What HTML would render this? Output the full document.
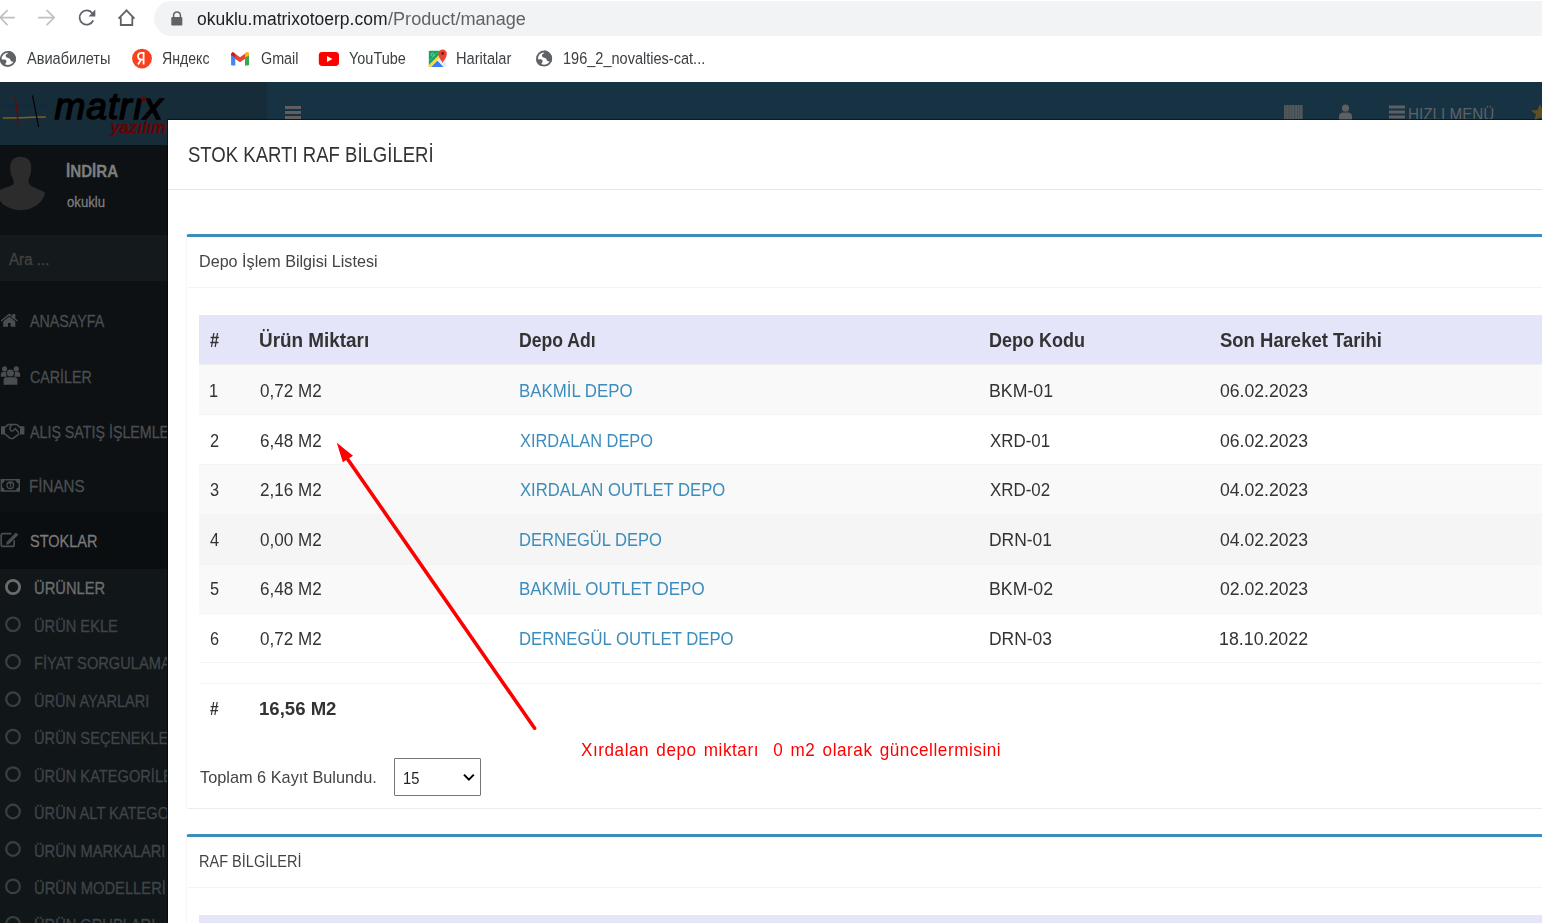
<!DOCTYPE html>
<html><head><meta charset="utf-8"><title>Stok</title><style>
*{box-sizing:border-box;margin:0;padding:0}
html,body{width:1542px;height:923px;overflow:hidden;background:#fff;font-family:"Liberation Sans",sans-serif;position:relative}
.t{position:absolute;white-space:nowrap;transform-origin:0 0;display:block}
.abs{position:absolute}
.side .t{-webkit-text-stroke:0.3px currentColor}
</style></head>
<body>
<!-- browser chrome -->
<div class="abs" style="left:0;top:0;width:1542px;height:82px;background:#fff"></div>
<svg class="abs" style="left:0;top:0" width="150" height="40" viewBox="0 0 150 40">
  <g fill="none" stroke="#bdc1c6" stroke-width="1.7" stroke-linecap="square">
    <path d="M14 17.6 H1.2 M7 10.6 L0.2 17.6 L7 24.6"/>
    <path d="M38.8 17.6 H53.4 M47.2 10.6 L54.2 17.6 L47.2 24.6"/>
  </g>
  <g fill="none" stroke="#5f6368" stroke-width="1.8">
    <path d="M93.2 20.4 A7.1 7.1 0 1 1 92.3 13.2"/>
    <path d="M120.8 17.2 V25 H132.3 V17.2" stroke-linejoin="miter"/>
    <path d="M118.6 18.6 L126.5 10.4 L134.4 18.6"/>
  </g>
  <path d="M95.3 9.6 V16.6 H88.6 Z" fill="#5f6368"/>
</svg>
<div class="abs" style="left:154px;top:1px;width:1420px;height:35px;border-radius:17.5px;background:#f1f3f4"></div>
<svg class="abs" style="left:168px;top:9px" width="18" height="20" viewBox="0 0 18 20">
  <path d="M5.6 8.5 V6.3 A3.4 3.4 0 0 1 12.4 6.3 V8.5" fill="none" stroke="#5f6368" stroke-width="1.5"/>
  <rect x="3.3" y="8" width="11" height="8.6" rx="1.2" fill="#5f6368"/>
</svg>

<!-- bookmark icons -->
<svg class="abs" style="left:0;top:44px" width="720" height="32" viewBox="0 44 720 32">
  <!-- globe 1 -->
  <g>
  <circle cx="7.9" cy="58.9" r="7.1" fill="none" stroke="#5f6368" stroke-width="1.8"/>
  <path d="M7.9 50.9 L7.9 53.6 C6.2 54 5.4 55.2 5.8 56.6 C6.2 58 8.6 57.8 9.8 58.8 C10.6 59.6 10.4 60.8 11.6 61.6 L15.3 62 A8 8 0 0 0 7.9 50.9 Z" fill="#5f6368"/>
  <path d="M-0.1 59.5 L4.5 59.5 C5.8 59.5 6.6 60.5 6.4 61.8 C6.2 63 5 63.6 5.1 65 L5.3 66.5 A8 8 0 0 1 -0.1 59.5 Z" fill="#5f6368"/>
  </g>
  <!-- yandex -->
  <circle cx="142" cy="58.6" r="9.9" fill="#fc3f1d"/>
  <path d="M143.6 64.4 V52.9 H141.8 C139 52.9 138 54.6 138 56.4 C138 58.2 139.1 59.4 141.1 59.6 L138 64.4 M143.6 59.6 H141.2" fill="none" stroke="#fff" stroke-width="1.8"/>
  <!-- gmail -->
  <path d="M231.1 53.8 L232.8 52.1 L240 57.2 L247.2 52.1 L249 53.8 V56 L240 62.2 L231.1 56 Z" fill="#ea4335"/>
  <path d="M231.1 53.8 L232.8 52.1 L235.3 53.9 V57.5 L231.1 56 Z" fill="#c5221f"/>
  <path d="M231.1 55 V64.2 Q231.1 65.4 232.3 65.4 H235.3 V57.5 Z" fill="#4285f4"/>
  <path d="M245 57.5 V65.4 H247.8 Q249 65.4 249 64.2 V55 Z" fill="#34a853"/>
  <path d="M245 53.9 L247.2 52.1 Q249 51.6 249 53.8 V55.6 L245 57.5 Z" fill="#fbbc04"/>
  <!-- youtube -->
  <rect x="318.8" y="52" width="20.2" height="13.9" rx="3.4" fill="#ff0000"/>
  <path d="M327 55.9 V62.1 L332.4 59 Z" fill="#fff"/>
  <!-- maps -->
  <path d="M429.8 50.7 H439.5 L428.8 61.4 V51.7 Q428.8 50.7 429.8 50.7 Z" fill="#1aa260"/>
  <path d="M428.8 61.4 L439.5 50.7 L441 52.5 L438.6 57.2 L428.8 67 Z" fill="#1aa260"/>
  <path d="M428.8 65 L439.2 54.6 L440.4 56.4 L430.6 67 H428.8 Z" fill="#fbd830"/>
  <path d="M431 67 L437.4 60.6 L443.8 67 Z" fill="#3b7ff0"/>
  <path d="M437.4 60.6 L440.2 57.6 L446 63.2 V66 Q446 67 445 67 H443.8 Z" fill="#e8eaed"/>
  <path d="M442.6 62.8 C441.4 60.4 438.4 58 438.4 53.6 A4.2 4.2 0 0 1 446.8 53.6 C446.8 58 443.8 60.4 442.6 62.8 Z" fill="#e94235"/>
  <circle cx="442.6" cy="53.5" r="1.4" fill="#7a1a12"/>
  <circle cx="432.6" cy="54.6" r="1.5" fill="none" stroke="#8fd3b0" stroke-width="0.8"/>
  <!-- globe 2 -->
  <g transform="translate(536.2,-0.3)">
  <circle cx="7.9" cy="58.9" r="7.1" fill="none" stroke="#5f6368" stroke-width="1.8"/>
  <path d="M7.9 50.9 L7.9 53.6 C6.2 54 5.4 55.2 5.8 56.6 C6.2 58 8.6 57.8 9.8 58.8 C10.6 59.6 10.4 60.8 11.6 61.6 L15.3 62 A8 8 0 0 0 7.9 50.9 Z" fill="#5f6368"/>
  <path d="M-0.1 59.5 L4.5 59.5 C5.8 59.5 6.6 60.5 6.4 61.8 C6.2 63 5 63.6 5.1 65 L5.3 66.5 A8 8 0 0 1 -0.1 59.5 Z" fill="#5f6368"/>
  </g>
</svg>

<!-- app header -->
<div class="abs" style="left:0;top:82px;width:267px;height:63px;background:#172c39"></div>
<div class="abs" style="left:267px;top:82px;width:1275px;height:40px;background:#163243"></div>
<!-- logo -->
<svg class="abs" style="left:0;top:82px" width="170" height="63" viewBox="0 82 170 63">
  <path d="M2.8 105.2 C18 105.4 32 105.8 47.4 106" fill="none" stroke="#0a2a50" stroke-width="1.4"/>
  <path d="M2.8 118 C18 117.8 32 117.4 45.8 117" fill="none" stroke="#806018" stroke-width="1.5"/>
  <path d="M14.9 95.8 C16.4 105 17.4 115 18.2 125.5" fill="none" stroke="#5e0c0c" stroke-width="1.3"/>
  <path d="M32.5 95.5 L38.6 127" fill="none" stroke="#000" stroke-width="1.2"/>
  
</svg>
<div class="abs" style="left:54.5px;top:88px;font:italic 37px/37px 'Liberation Sans',sans-serif;-webkit-text-stroke:1.5px #000;color:#000;transform:scaleX(1.0);transform-origin:0 0;letter-spacing:1px">matrıx</div>
<div class="abs" style="left:110.5px;top:120px;font:italic 16px/16px 'Liberation Sans',sans-serif;-webkit-text-stroke:0.7px #6b0000;color:#6b0000;transform:scaleX(1.04);letter-spacing:0.3px;transform-origin:0 0">yazılım</div>

<svg class="abs" style="left:130px;top:92px;z-index:5" width="20" height="14" viewBox="130 92 20 14"><path d="M139.6 97.4 L147 97.4 L143.2 102.2 Z" fill="#6b0000"/></svg>
<!-- navbar icons -->
<div class="abs" style="left:285px;top:105.5px;width:16px;height:3px;background:#5f5f5f"></div>
<div class="abs" style="left:285px;top:110.5px;width:16px;height:3px;background:#5f5f5f"></div>
<div class="abs" style="left:285px;top:115.5px;width:16px;height:3px;background:#5f5f5f"></div>
<svg class="abs" style="left:1280px;top:100px" width="262" height="20" viewBox="1280 100 262 20">
  <g fill="#5d5f60">
    <rect x="1284" y="105" width="18.6" height="14.2" fill="#525a5e"/>
    <g fill="#3a464d"><rect x="1285.6" y="105" width="0.7" height="14.2"/><rect x="1288.6" y="105" width="0.8" height="14.2"/><rect x="1291.4" y="105" width="0.6" height="14.2"/><rect x="1294.2" y="105" width="0.9" height="14.2"/><rect x="1297" y="105" width="0.6" height="14.2"/><rect x="1299.4" y="105" width="0.7" height="14.2"/></g>
    <circle cx="1345.5" cy="108.2" r="3.6"/>
    <path d="M1339 120 V116.5 C1339 113.5 1341 112.5 1343 112.5 H1348 C1350 112.5 1352 113.5 1352 116.5 V120 Z"/>
    <rect x="1389" y="105.5" width="16" height="3"/><rect x="1389" y="110.5" width="16" height="3"/><rect x="1389" y="115.5" width="16" height="3"/>
  </g>
  <path d="M1540 104 L1542.5 110 L1549 110.5 L1544 114.5 L1546 121 L1540 117.5 L1534 121 L1536 114.5 L1531 110.5 L1537.5 110 Z" fill="#5e4f25"/>
</svg>

<!-- sidebar -->
<div class="abs" style="left:0;top:145px;width:168px;height:778px;background:#0d1113"></div>
<div class="abs" style="left:0;top:235px;width:168px;height:46px;background:#14191c"></div>
<div class="abs" style="left:0;top:512px;width:168px;height:57px;background:#0b0e10"></div>
<div class="abs" style="left:0;top:569px;width:168px;height:354px;background:#111619"></div>
<!-- avatar -->
<svg class="abs" style="left:0;top:150px" width="50" height="65" viewBox="0 150 50 65">
  <path d="M20.5 156.8 C27 156.8 31.2 160.4 31.2 166.6 C31.4 171 31 174.6 29 178 C28 180.6 28.4 183.6 30.6 185.4 C35 188.6 43 190 45 193 C44 201 34 210.2 21 210.2 C11 210.2 2 205 0 200.5 V190 C4 188 10 186.6 13 184.6 C14.4 183 13.8 180.6 12.6 178 C10.6 174.6 10 171 10.2 166.6 C10.4 160.4 14 156.8 20.5 156.8 Z" fill="#2c2c2c"/>
</svg>
<!-- sidebar icons -->
<svg class="abs" style="left:0;top:300px" width="30" height="260" viewBox="0 300 30 260">
  <g fill="#4a4d50">
    <!-- home -->
    <path d="M1.2 321 L9.3 314.4 L17.4 321" fill="none" stroke="#4a4d50" stroke-width="1.5"/>
    <rect x="12.4" y="314" width="2.9" height="4.6"/>
    <path d="M3.2 321.6 L9.3 316.5 L15.3 321.6 V326.8 H10.7 V323 H8 V326.8 H3.2 Z"/>
    <!-- users -->
    <circle cx="4.6" cy="368.9" r="2.6"/><circle cx="16.3" cy="368.9" r="2.6"/><circle cx="10.4" cy="373" r="3.5"/>
    <path d="M0.8 376.8 V374.4 Q0.8 372 3.2 372 H6.4 Q5.6 374.4 6.8 376.8 Z"/>
    <path d="M20.2 376.8 V374.4 Q20.2 372 17.8 372 H14.6 Q15.4 374.4 14.2 376.8 Z"/>
    <path d="M3.6 384.8 V380 Q3.6 377.2 6.4 377.2 H14.6 Q17.4 377.2 17.4 380 V384.8 Z"/>
    <!-- money -->
    <path d="M0.6 479 H20 V491.7 H0.6 Z M2.1 483.2 Q4.4 483.2 4.4 480.6 H16.2 Q16.2 483.2 18.5 483.2 V487.6 Q16.2 487.6 16.2 490.2 H4.4 Q4.4 487.6 2.1 487.6 Z" fill-rule="evenodd"/>
    <circle cx="10.3" cy="485.3" r="3.3" fill="none" stroke="#4a4d50" stroke-width="1.3"/>
    <path d="M9.3 483.8 L10.7 483.2 V487.4" fill="none" stroke="#4a4d50" stroke-width="1.1"/>
    <!-- edit -->
    <path d="M11.4 533.6 H3.2 Q1.2 533.6 1.2 535.6 V544.4 Q1.2 546.4 3.2 546.4 H12.2 Q14.2 546.4 14.2 544.4 V540.2" fill="none" stroke="#4a4d50" stroke-width="1.7"/>
    <path d="M8.2 542.6 L17.2 533.6" fill="none" stroke="#4a4d50" stroke-width="3.4"/>
    <path d="M6 544.8 L6.8 541.2 L9.6 544 Z"/>
  </g>
  <g fill="#4a4d50"><rect x="1" y="426.2" width="4" height="8.3"/><rect x="20" y="426.2" width="4.4" height="8.3"/></g>
  <path d="M4.8 427.4 C6 426.8 7 425 8.6 424.6 H16.6 C17.6 424.8 18.6 426.4 20 427.4 M12.6 424.6 C10.6 425.6 9.6 427.8 10.2 429.6 C10.8 431.4 13 431.4 14.4 429.6 L15.2 428.6 L18.8 432.8 M4.8 433.8 L9.2 437.6 C10.4 438.8 12.6 438.8 13.8 437.8 L19.4 433.6" fill="none" stroke="#4a4d50" stroke-width="1.5"/>
</svg>
<svg class="abs" style="left:0;top:570px" width="30" height="353" viewBox="0 570 30 353">
  <circle cx="13" cy="587" r="6.6" fill="none" stroke="#6b6b6b" stroke-width="2.8"/>
  <g fill="none" stroke="#394043" stroke-width="2.2">
    <circle cx="13" cy="624.3" r="6.8"/>
    <circle cx="13" cy="661.7" r="6.8"/>
    <circle cx="13" cy="699.2" r="6.8"/>
    <circle cx="13" cy="736.6" r="6.8"/>
    <circle cx="13" cy="774.1" r="6.8"/>
    <circle cx="13" cy="811.5" r="6.8"/>
    <circle cx="13" cy="849" r="6.8"/>
    <circle cx="13" cy="886.4" r="6.8"/>
    <circle cx="13" cy="923.8" r="6.8"/>
  </g>
</svg>

<!-- modal -->
<div class="abs" style="left:167px;top:119px;width:1400px;height:830px;background:#fff;background-clip:padding-box;border:1px solid rgba(0,0,0,0.5)"></div>
<div class="abs" style="left:168px;top:189px;width:1374px;height:1px;background:#e5e5e5"></div>
<!-- box 1 -->
<div class="abs" style="left:186px;top:234px;width:1400px;height:575px;border:1px solid #f6f6f6;border-bottom-color:#ececec;border-top:3px solid #3c8dbc;border-radius:3px;background:#fff"></div>
<div class="abs" style="left:188px;top:287px;width:1354px;height:1px;background:#f4f4f4"></div>
<!-- table -->
<div class="abs" style="left:199px;top:315px;width:1343px;height:49px;background:#e4e5f9"></div>
<div class="abs" style="left:199px;top:364px;width:1343px;height:1px;background:#f0f0f0"></div>
<div class="abs" style="left:199px;top:365px;width:1343px;height:49px;background:#f9f9f9"></div>
<div class="abs" style="left:199px;top:414px;width:1343px;height:1px;background:#f4f4f4"></div>
<div class="abs" style="left:199px;top:464px;width:1343px;height:1px;background:#f4f4f4"></div>
<div class="abs" style="left:199px;top:465px;width:1343px;height:49px;background:#f9f9f9"></div>
<div class="abs" style="left:199px;top:514px;width:1343px;height:49.5px;background:#f5f5f5"></div>
<div class="abs" style="left:199px;top:514px;width:1343px;height:1px;background:#f4f4f4"></div>
<div class="abs" style="left:199px;top:563.5px;width:1343px;height:50px;background:#f9f9f9"></div>
<div class="abs" style="left:199px;top:563.5px;width:1343px;height:1px;background:#f4f4f4"></div>
<div class="abs" style="left:199px;top:613px;width:1343px;height:1px;background:#f4f4f4"></div>
<div class="abs" style="left:199px;top:662px;width:1343px;height:1px;background:#f4f4f4"></div>
<div class="abs" style="left:199px;top:683px;width:1343px;height:1px;background:#f4f4f4"></div>
<!-- select -->
<div class="abs" style="left:394px;top:758px;width:87px;height:38px;border:1px solid #767676;border-radius:1px;background:#fff"></div>
<svg class="abs" style="left:460px;top:770px" width="16" height="14" viewBox="0 0 16 14">
  <path d="M4 4.6 L8.9 9.6 L13.8 4.6" fill="none" stroke="#000" stroke-width="2"/>
</svg>
<!-- box 2 -->
<div class="abs" style="left:186px;top:834px;width:1400px;height:200px;border:1px solid #f6f6f6;border-top:3px solid #3c8dbc;border-radius:3px;background:#fff"></div>
<div class="abs" style="left:188px;top:887px;width:1354px;height:1px;background:#f4f4f4"></div>
<div class="abs" style="left:199px;top:915px;width:1343px;height:8px;background:#e4e5f9"></div>

<div id="annot" class="abs" style="left:581px;top:741px;font:18.5px/18.5px 'Liberation Sans',sans-serif;color:#ff0000;white-space:pre;letter-spacing:0.6px;word-spacing:2px;transform:scaleX(0.925);transform-origin:0 0;z-index:3">Xırdalan depo miktarı  0 m2 olarak güncellermisini</div>
<!-- annotation arrow -->
<svg class="abs" style="left:0;top:0" width="1542" height="923" viewBox="0 0 1542 923">
  <path d="M534.6 728.2 L346.5 457.5" fill="none" stroke="#ff0000" stroke-width="3.6" stroke-linecap="round"/>
  <path d="M336.8 442.8 L353 455.8 L342.8 462.3 Z" fill="#ff0000"/>
</svg>

<div id="texts">
<div class="abs" style="left:0;top:0;width:1542px;height:119px;overflow:hidden"><span id="t8" class="t" style="left:1407.62px;top:106.42px;font-size:17.39px;line-height:17.39px;color:#5e6366;font-weight:400;transform:scaleX(0.8770);">HIZLI MENÜ</span></div><div class="abs side" style="left:0;top:0;width:167px;height:923px;overflow:hidden"><span id="t9" class="t" style="left:66.13px;top:163.22px;font-size:17.39px;line-height:17.39px;color:#7d7d7d;font-weight:700;transform:scaleX(0.8719);">İNDİRA</span>
<span id="t10" class="t" style="left:67.00px;top:194.68px;font-size:14.49px;line-height:14.49px;color:#7d7d7d;font-weight:400;transform:scaleX(0.9088);">okuklu</span>
<span id="t11" class="t" style="left:9.00px;top:251.75px;font-size:15.94px;line-height:15.94px;color:#424242;font-weight:400;transform:scaleX(0.9493);">Ara ...</span>
<span id="t12" class="t" style="left:29.50px;top:313.22px;font-size:17.39px;line-height:17.39px;color:#4a4e51;font-weight:400;transform:scaleX(0.8200);">ANASAYFA</span>
<span id="t13" class="t" style="left:29.50px;top:368.72px;font-size:17.39px;line-height:17.39px;color:#4a4e51;font-weight:400;transform:scaleX(0.8199);">CARİLER</span>
<span id="t14" class="t" style="left:29.50px;top:423.72px;font-size:17.39px;line-height:17.39px;color:#4a4e51;font-weight:400;transform:scaleX(0.8200);">ALIŞ SATIŞ İŞLEMLERİ</span>
<span id="t15" class="t" style="left:28.63px;top:478.22px;font-size:17.39px;line-height:17.39px;color:#4a4e51;font-weight:400;transform:scaleX(0.8724);">FİNANS</span>
<span id="t16" class="t" style="left:29.60px;top:533.96px;font-size:16.52px;line-height:16.52px;color:#7a7a7a;font-weight:400;transform:scaleX(0.8768);">STOKLAR</span>
<span id="t17" class="t" style="left:33.70px;top:580.38px;font-size:16.38px;line-height:16.38px;color:#6e6e6e;font-weight:400;transform:scaleX(0.8995);">ÜRÜNLER</span>
<span id="t18" class="t" style="left:33.70px;top:617.83px;font-size:16.38px;line-height:16.38px;color:#3f4548;font-weight:400;transform:scaleX(0.8951);">ÜRÜN EKLE</span>
<span id="t19" class="t" style="left:33.70px;top:655.28px;font-size:16.38px;line-height:16.38px;color:#3f4548;font-weight:400;transform:scaleX(0.8950);">FİYAT SORGULAMA</span>
<span id="t20" class="t" style="left:33.71px;top:692.73px;font-size:16.38px;line-height:16.38px;color:#3f4548;font-weight:400;transform:scaleX(0.8917);">ÜRÜN AYARLARI</span>
<span id="t21" class="t" style="left:33.70px;top:730.18px;font-size:16.38px;line-height:16.38px;color:#3f4548;font-weight:400;transform:scaleX(0.8950);">ÜRÜN SEÇENEKLERİ</span>
<span id="t22" class="t" style="left:33.70px;top:767.63px;font-size:16.38px;line-height:16.38px;color:#3f4548;font-weight:400;transform:scaleX(0.8950);">ÜRÜN KATEGORİLERİ</span>
<span id="t23" class="t" style="left:33.70px;top:805.08px;font-size:16.38px;line-height:16.38px;color:#3f4548;font-weight:400;transform:scaleX(0.8950);">ÜRÜN ALT KATEGORİ</span>
<span id="t24" class="t" style="left:33.70px;top:842.53px;font-size:16.38px;line-height:16.38px;color:#3f4548;font-weight:400;transform:scaleX(0.8978);">ÜRÜN MARKALARI</span>
<span id="t25" class="t" style="left:33.70px;top:879.98px;font-size:16.38px;line-height:16.38px;color:#3f4548;font-weight:400;transform:scaleX(0.9012);">ÜRÜN MODELLERİ</span>
<span id="t26" class="t" style="left:33.70px;top:917.43px;font-size:16.38px;line-height:16.38px;color:#3f4548;font-weight:400;transform:scaleX(0.8950);">ÜRÜN GRUPLARI</span></div><div class="abs gs" style="left:0;top:0;width:1542px;height:923px;will-change:transform"><span id="t0" class="t" style="left:197.00px;top:10.36px;font-size:18.41px;line-height:18.41px;color:#202124;font-weight:400;transform:scaleX(0.9499);">okuklu.matrixotoerp.com</span>
<span id="t1" class="t" style="left:388.00px;top:10.36px;font-size:18.41px;line-height:18.41px;color:#5f6368;font-weight:400;transform:scaleX(0.9833);">/Product/manage</span>
<span id="t2" class="t" style="left:27.00px;top:51.45px;font-size:15.94px;line-height:15.94px;color:#3c4043;font-weight:400;transform:scaleX(0.9138);">Авиабилеты</span>
<span id="t3" class="t" style="left:161.60px;top:51.45px;font-size:15.94px;line-height:15.94px;color:#3c4043;font-weight:400;transform:scaleX(0.8858);">Яндекс</span>
<span id="t4" class="t" style="left:260.80px;top:51.45px;font-size:15.94px;line-height:15.94px;color:#3c4043;font-weight:400;transform:scaleX(0.9007);">Gmail</span>
<span id="t5" class="t" style="left:349.00px;top:51.45px;font-size:15.94px;line-height:15.94px;color:#3c4043;font-weight:400;transform:scaleX(0.9081);">YouTube</span>
<span id="t6" class="t" style="left:456.08px;top:51.45px;font-size:15.94px;line-height:15.94px;color:#3c4043;font-weight:400;transform:scaleX(0.9179);">Haritalar</span>
<span id="t7" class="t" style="left:563.09px;top:51.45px;font-size:15.94px;line-height:15.94px;color:#3c4043;font-weight:400;transform:scaleX(0.9120);">196_2_novalties-cat...</span>
<span id="t27" class="t" style="left:188.00px;top:143.72px;font-size:21.74px;line-height:21.74px;color:#333333;font-weight:400;transform:scaleX(0.8534);">STOK KARTI RAF BİLGİLERİ</span>
<span id="t28" class="t" style="left:198.99px;top:254.45px;font-size:15.94px;line-height:15.94px;color:#444444;font-weight:400;transform:scaleX(1.0130);">Depo İşlem Bilgisi Listesi</span>
<span id="t29" class="t" style="left:210.00px;top:330.30px;font-size:20.00px;line-height:20.00px;color:#333333;font-weight:700;transform:scaleX(0.8182);">#</span>
<span id="t30" class="t" style="left:259.06px;top:330.30px;font-size:20.00px;line-height:20.00px;color:#333333;font-weight:700;transform:scaleX(0.9442);">Ürün Miktarı</span>
<span id="t31" class="t" style="left:519.12px;top:330.30px;font-size:20.00px;line-height:20.00px;color:#333333;font-weight:700;transform:scaleX(0.8815);">Depo Adı</span>
<span id="t32" class="t" style="left:988.70px;top:330.30px;font-size:20.00px;line-height:20.00px;color:#333333;font-weight:700;transform:scaleX(0.8991);">Depo Kodu</span>
<span id="t33" class="t" style="left:1220.00px;top:330.30px;font-size:20.00px;line-height:20.00px;color:#333333;font-weight:700;transform:scaleX(0.9240);">Son Hareket Tarihi</span>
<span id="t34" class="t" style="left:209.10px;top:382.10px;font-size:18.12px;line-height:18.12px;color:#333333;font-weight:400;transform:scaleX(0.9000);">1</span>
<span id="t35" class="t" style="left:260.00px;top:382.10px;font-size:18.12px;line-height:18.12px;color:#333333;font-weight:400;transform:scaleX(0.9424);">0,72 M2</span>
<span id="t36" class="t" style="left:519.07px;top:382.10px;font-size:18.12px;line-height:18.12px;color:#3c8dbc;font-weight:400;transform:scaleX(0.9302);">BAKMİL DEPO</span>
<span id="t37" class="t" style="left:988.62px;top:382.10px;font-size:18.12px;line-height:18.12px;color:#333333;font-weight:400;transform:scaleX(0.9791);">BKM-01</span>
<span id="t38" class="t" style="left:1220.00px;top:382.10px;font-size:18.12px;line-height:18.12px;color:#333333;font-weight:400;transform:scaleX(0.9717);">06.02.2023</span>
<span id="t39" class="t" style="left:210.00px;top:431.90px;font-size:18.12px;line-height:18.12px;color:#333333;font-weight:400;transform:scaleX(0.9000);">2</span>
<span id="t40" class="t" style="left:260.00px;top:431.90px;font-size:18.12px;line-height:18.12px;color:#333333;font-weight:400;transform:scaleX(0.9424);">6,48 M2</span>
<span id="t41" class="t" style="left:520.00px;top:431.90px;font-size:18.12px;line-height:18.12px;color:#3c8dbc;font-weight:400;transform:scaleX(0.9057);">XIRDALAN DEPO</span>
<span id="t42" class="t" style="left:989.60px;top:431.90px;font-size:18.12px;line-height:18.12px;color:#333333;font-weight:400;transform:scaleX(0.9326);">XRD-01</span>
<span id="t43" class="t" style="left:1220.00px;top:431.90px;font-size:18.12px;line-height:18.12px;color:#333333;font-weight:400;transform:scaleX(0.9717);">06.02.2023</span>
<span id="t44" class="t" style="left:210.00px;top:481.10px;font-size:18.12px;line-height:18.12px;color:#333333;font-weight:400;transform:scaleX(0.9000);">3</span>
<span id="t45" class="t" style="left:260.00px;top:481.10px;font-size:18.12px;line-height:18.12px;color:#333333;font-weight:400;transform:scaleX(0.9424);">2,16 M2</span>
<span id="t46" class="t" style="left:520.00px;top:481.10px;font-size:18.12px;line-height:18.12px;color:#3c8dbc;font-weight:400;transform:scaleX(0.9202);">XIRDALAN OUTLET DEPO</span>
<span id="t47" class="t" style="left:989.60px;top:481.10px;font-size:18.12px;line-height:18.12px;color:#333333;font-weight:400;transform:scaleX(0.9326);">XRD-02</span>
<span id="t48" class="t" style="left:1220.00px;top:481.10px;font-size:18.12px;line-height:18.12px;color:#333333;font-weight:400;transform:scaleX(0.9717);">04.02.2023</span>
<span id="t49" class="t" style="left:210.00px;top:530.80px;font-size:18.12px;line-height:18.12px;color:#333333;font-weight:400;transform:scaleX(0.9000);">4</span>
<span id="t50" class="t" style="left:260.00px;top:530.80px;font-size:18.12px;line-height:18.12px;color:#333333;font-weight:400;transform:scaleX(0.9424);">0,00 M2</span>
<span id="t51" class="t" style="left:519.09px;top:530.80px;font-size:18.12px;line-height:18.12px;color:#3c8dbc;font-weight:400;transform:scaleX(0.9141);">DERNEGÜL DEPO</span>
<span id="t52" class="t" style="left:988.64px;top:530.80px;font-size:18.12px;line-height:18.12px;color:#333333;font-weight:400;transform:scaleX(0.9637);">DRN-01</span>
<span id="t53" class="t" style="left:1220.00px;top:530.80px;font-size:18.12px;line-height:18.12px;color:#333333;font-weight:400;transform:scaleX(0.9717);">04.02.2023</span>
<span id="t54" class="t" style="left:210.00px;top:580.10px;font-size:18.12px;line-height:18.12px;color:#333333;font-weight:400;transform:scaleX(0.9000);">5</span>
<span id="t55" class="t" style="left:260.00px;top:580.10px;font-size:18.12px;line-height:18.12px;color:#333333;font-weight:400;transform:scaleX(0.9424);">6,48 M2</span>
<span id="t56" class="t" style="left:519.06px;top:580.10px;font-size:18.12px;line-height:18.12px;color:#3c8dbc;font-weight:400;transform:scaleX(0.9361);">BAKMİL OUTLET DEPO</span>
<span id="t57" class="t" style="left:988.62px;top:580.10px;font-size:18.12px;line-height:18.12px;color:#333333;font-weight:400;transform:scaleX(0.9791);">BKM-02</span>
<span id="t58" class="t" style="left:1220.00px;top:580.10px;font-size:18.12px;line-height:18.12px;color:#333333;font-weight:400;transform:scaleX(0.9717);">02.02.2023</span>
<span id="t59" class="t" style="left:210.00px;top:629.60px;font-size:18.12px;line-height:18.12px;color:#333333;font-weight:400;transform:scaleX(0.9000);">6</span>
<span id="t60" class="t" style="left:260.00px;top:629.60px;font-size:18.12px;line-height:18.12px;color:#333333;font-weight:400;transform:scaleX(0.9424);">0,72 M2</span>
<span id="t61" class="t" style="left:519.08px;top:629.60px;font-size:18.12px;line-height:18.12px;color:#3c8dbc;font-weight:400;transform:scaleX(0.9231);">DERNEGÜL OUTLET DEPO</span>
<span id="t62" class="t" style="left:988.64px;top:629.60px;font-size:18.12px;line-height:18.12px;color:#333333;font-weight:400;transform:scaleX(0.9637);">DRN-03</span>
<span id="t63" class="t" style="left:1219.02px;top:629.60px;font-size:18.12px;line-height:18.12px;color:#333333;font-weight:400;transform:scaleX(0.9825);">18.10.2022</span>
<span id="t64" class="t" style="left:210.00px;top:699.99px;font-size:18.84px;line-height:18.84px;color:#333333;font-weight:700;transform:scaleX(0.8182);">#</span>
<span id="t65" class="t" style="left:259.01px;top:699.99px;font-size:18.84px;line-height:18.84px;color:#333333;font-weight:700;transform:scaleX(0.9866);">16,56 M2</span>
<span id="t66" class="t" style="left:200.00px;top:769.22px;font-size:17.39px;line-height:17.39px;color:#444444;font-weight:400;transform:scaleX(0.9386);">Toplam 6 Kayıt Bulundu.</span>
<span id="t67" class="t" style="left:402.67px;top:770.57px;font-size:15.80px;line-height:15.80px;color:#222222;font-weight:400;transform:scaleX(0.9299);">15</span>
<span id="t68" class="t" style="left:199.16px;top:853.22px;font-size:17.39px;line-height:17.39px;color:#444444;font-weight:400;transform:scaleX(0.8361);">RAF BİLGİLERİ</span></div>
</div>
</body></html>
